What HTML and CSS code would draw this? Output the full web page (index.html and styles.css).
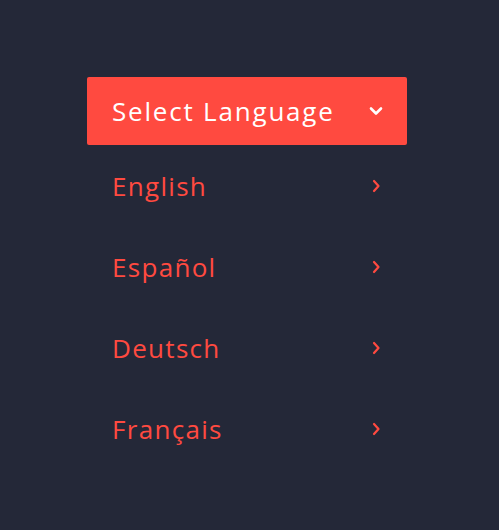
FILE: index.html
```html
<!DOCTYPE html>
<html lang="en">
<head>
<meta charset="utf-8">
<link rel="stylesheet" href="styles.css">
</head>
<body>
<div class="menu">
  <div class="menu-header">
    <span class="label label-head">Select Language</span>
    <svg class="chev-down" width="14" height="10" viewBox="0 0 14 10"><path d="M2 2.5 L7 7.5 L12 2.5" fill="none" stroke="#fff" stroke-width="2.6" stroke-linecap="round" stroke-linejoin="round"/></svg>
  </div>
  <ul class="menu-list">
    <li class="menu-item"><span class="label">English</span><svg class="chev-right" width="10" height="14" viewBox="0 0 10 14"><path d="M3 2 L7.5 7 L3 12" fill="none" stroke="#ff4a40" stroke-width="2.2" stroke-linecap="round" stroke-linejoin="round"/></svg></li>
    <li class="menu-item"><span class="label">Español</span><svg class="chev-right" width="10" height="14" viewBox="0 0 10 14"><path d="M3 2 L7.5 7 L3 12" fill="none" stroke="#ff4a40" stroke-width="2.2" stroke-linecap="round" stroke-linejoin="round"/></svg></li>
    <li class="menu-item"><span class="label">Deutsch</span><svg class="chev-right" width="10" height="14" viewBox="0 0 10 14"><path d="M3 2 L7.5 7 L3 12" fill="none" stroke="#ff4a40" stroke-width="2.2" stroke-linecap="round" stroke-linejoin="round"/></svg></li>
    <li class="menu-item"><span class="label">Français</span><svg class="chev-right" width="10" height="14" viewBox="0 0 10 14"><path d="M3 2 L7.5 7 L3 12" fill="none" stroke="#ff4a40" stroke-width="2.2" stroke-linecap="round" stroke-linejoin="round"/></svg></li>
  </ul>
</div>
</body>
</html>
```

FILE: styles.css
```css
html, body {
  margin: 0;
  padding: 0;
  background: #242838;
  height: 100%;
}
body {
  font-family: "Open Sans", "Noto Sans", sans-serif;
}
.menu {
  width: 320px;
  padding-top: 77px;
  margin-left: 87px;
}
.menu-header {
  height: 68px;
  background: #ff4a40;
  border-radius: 2px;
  display: flex;
  align-items: center;
  justify-content: space-between;
  padding: 0 24px 0 25px;
  color: #fff;
  font-size: 26px;
}
.label {
  letter-spacing: 1.3px;
}
.label-head {
  letter-spacing: 1.8px;
}
.menu-list {
  list-style: none;
  margin: 0;
  padding: 0;
}
.menu-item {
  height: 81px;
  display: flex;
  align-items: center;
  justify-content: space-between;
  padding: 0 26px 0 25px;
  color: #ff4a40;
  font-size: 26px;
}
.chev-down, .chev-right {
  display: block;
}
```
